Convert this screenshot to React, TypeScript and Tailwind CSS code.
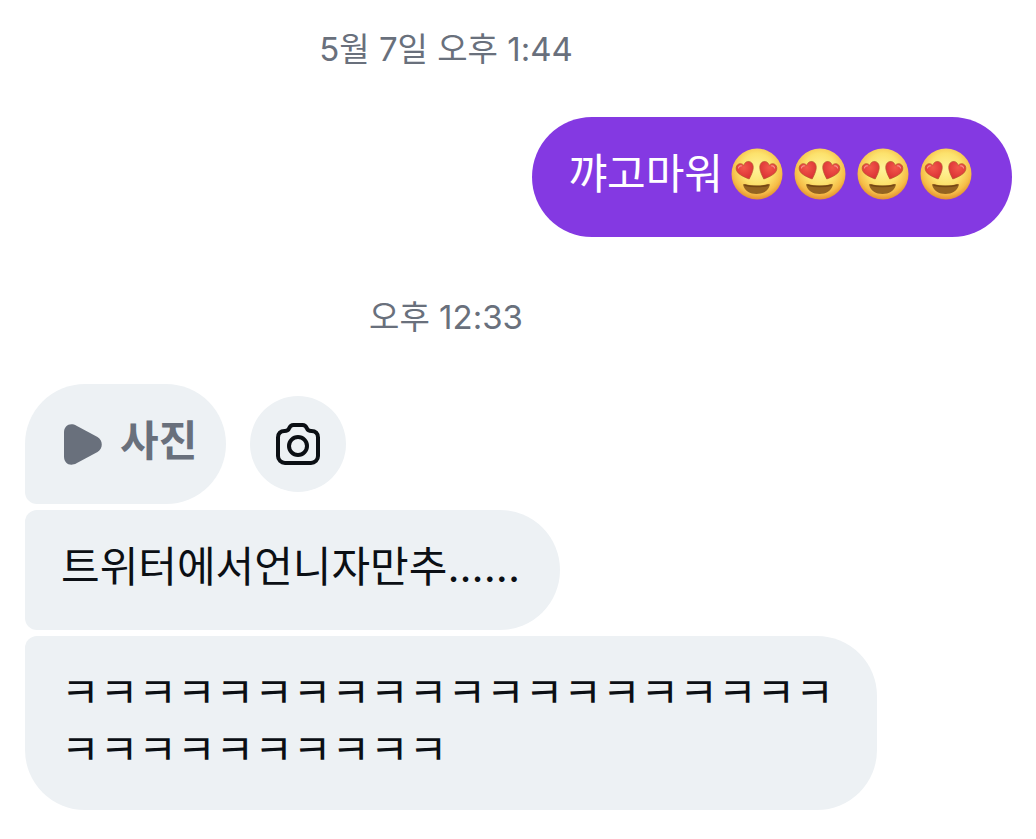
import type { ReactNode } from 'react'
import { clsx } from 'clsx'

function EmojiGradients() {
  return (
    <defs>
      <radialGradient id="face" cx="50%" cy="40%" r="61%">
        <stop offset="0" stopColor="#fff39a" />
        <stop offset="0.5" stopColor="#fce26d" />
        <stop offset="0.8" stopColor="#f6bd48" />
        <stop offset="1" stopColor="#e08a2e" />
      </radialGradient>
      <radialGradient id="heart" cx="45%" cy="35%" r="70%">
        <stop offset="0" stopColor="#f2574b" />
        <stop offset="1" stopColor="#d92f33" />
      </radialGradient>
    </defs>
  )
}

const HEART_PATH =
  'M18.2 31C12.5 28.8 6 26 5.2 21.2C4.500 16 10 13.8 13 17.5C13.6 12.8 19.5 11.9 21.6 16.2C23.6 20.500 20.500 26.5 18.2 31Z'

function HeartEyes() {
  return (
    <svg viewBox="0 0 52 52" className="size-[52px] shrink-0" role="img" aria-label="😍">
      <EmojiGradients />
      <circle cx="26" cy="26" r="25.5" fill="url(#face)" />
      <g fill="url(#heart)" stroke="#b5562f" strokeWidth="0.7">
        <path d={HEART_PATH} />
        <path d={HEART_PATH} transform="matrix(-1 0 0 1 51 0)" />
      </g>
      <g fill="none" stroke="#f9948a" strokeWidth="1.2" strokeLinecap="round">
        <path d="M7.5 20C7.8 18.400 9 17.600 10.300 17.900" />
        <path d="M43.5 20C43.2 18.400 42 17.600 40.700 17.900" />
      </g>
      <path
        d="M12.2 37.300C11.9 36.200 12.700 35.700 13.800 36C21.5 38 30 38 37.2 36C38.3 35.700 39.1 36.200 38.8 37.300C37.2 43 32 46 25.5 46C19 46 13.800 43 12.2 37.300Z"
        fill="#946321"
      />
      <path d="M13.5 37.2C21.5 39 29.5 39 37.5 37.2" fill="none" stroke="#744713" strokeWidth="1.4" />
    </svg>
  )
}

function PlayIcon() {
  return (
    <svg viewBox="0 0 38 41" className="h-[41px] w-[38px] shrink-0" fill="#69707c" aria-hidden="true">
      <path d="M0 8.5C0 1.5 6 -1.800 12.500 1.700L33.5 13C39.200 16.400 39.200 24.600 33.5 28L12.500 39.300C6 42.800 0 39.5 0 32.5Z" />
    </svg>
  )
}

function CameraIcon() {
  return (
    <svg
      viewBox="0 0 44 42"
      className="h-[42px] w-[44px]"
      fill="none"
      stroke="#0b0f14"
      strokeWidth="4"
      aria-hidden="true"
    >
      <path d="M9 40H35A7 7 0 0 0 42 33V14.5C42 10.5 39.5 8 35.5 8C32.8 8 31.8 7.5 31 5.5C30 3 28.8 2 26.5 2H17.5C15.2 2 14 3 13 5.5C12.2 7.5 11.2 8 8.5 8C4.5 8 2 10.5 2 14.5V33A7 7 0 0 0 9 40Z" />
      <circle cx="22" cy="23" r="9" />
    </svg>
  )
}

function Timestamp({ children }: { children: ReactNode }) {
  return <p className="pr-36 text-center text-[33px] leading-10 text-[#69707c]">{children}</p>
}

interface BubbleProps {
  mine?: boolean
  className?: string
  children: ReactNode
}

function Bubble({ mine, className, children }: BubbleProps) {
  return (
    <div
      className={clsx(
        'min-h-[120px] w-fit max-w-[852px] pt-7 pr-10 pb-8 pl-9 text-[42px] leading-[57px] break-all',
        mine ? 'rounded-[60px] bg-[#8439e2] text-white' : 'bg-[#edf1f4] text-[#0b0f14]',
        className,
      )}
    >
      {children}
    </div>
  )
}

export default function App() {
  return (
    <main className="min-h-screen bg-white py-[29px] font-['Inter','Noto_Sans_CJK_KR',sans-serif]">
      <Timestamp>5월 7일 오후 1:44</Timestamp>

      <div className="mt-12 flex justify-end pr-6">
        <Bubble mine className="flex items-start">
          <span>꺄고마워</span>
          <span className="ml-2 flex h-[57px] items-center gap-[11px]">
            <HeartEyes />
            <HeartEyes />
            <HeartEyes />
            <HeartEyes />
          </span>
        </Bubble>
      </div>

      <div className="mt-[60px]">
        <Timestamp>오후 12:33</Timestamp>
      </div>

      <div className="mt-[47px] flex flex-col gap-[6px] px-[25px]">
        <div className="flex items-center gap-6">
          <button
            type="button"
            className="flex h-[120px] items-center gap-[18px] rounded-[60px] rounded-bl-xl bg-[#edf1f4] pr-[29px] pl-[39px] text-[#69707c]"
          >
            <PlayIcon />
            <span className="pb-2 text-[42px] leading-[57px] font-bold">사진</span>
          </button>
          <button
            type="button"
            aria-label="카메라"
            className="flex size-24 items-center justify-center rounded-full bg-[#edf1f4]"
          >
            <CameraIcon />
          </button>
        </div>
        <Bubble className="rounded-l-xl rounded-r-[60px]">트위터에서언니자만추......</Bubble>
        <Bubble className="rounded-[60px] rounded-tl-xl">ㅋㅋㅋㅋㅋㅋㅋㅋㅋㅋㅋㅋㅋㅋㅋㅋㅋㅋㅋㅋㅋㅋㅋㅋㅋㅋㅋㅋㅋㅋ</Bubble>
      </div>
    </main>
  )
}
